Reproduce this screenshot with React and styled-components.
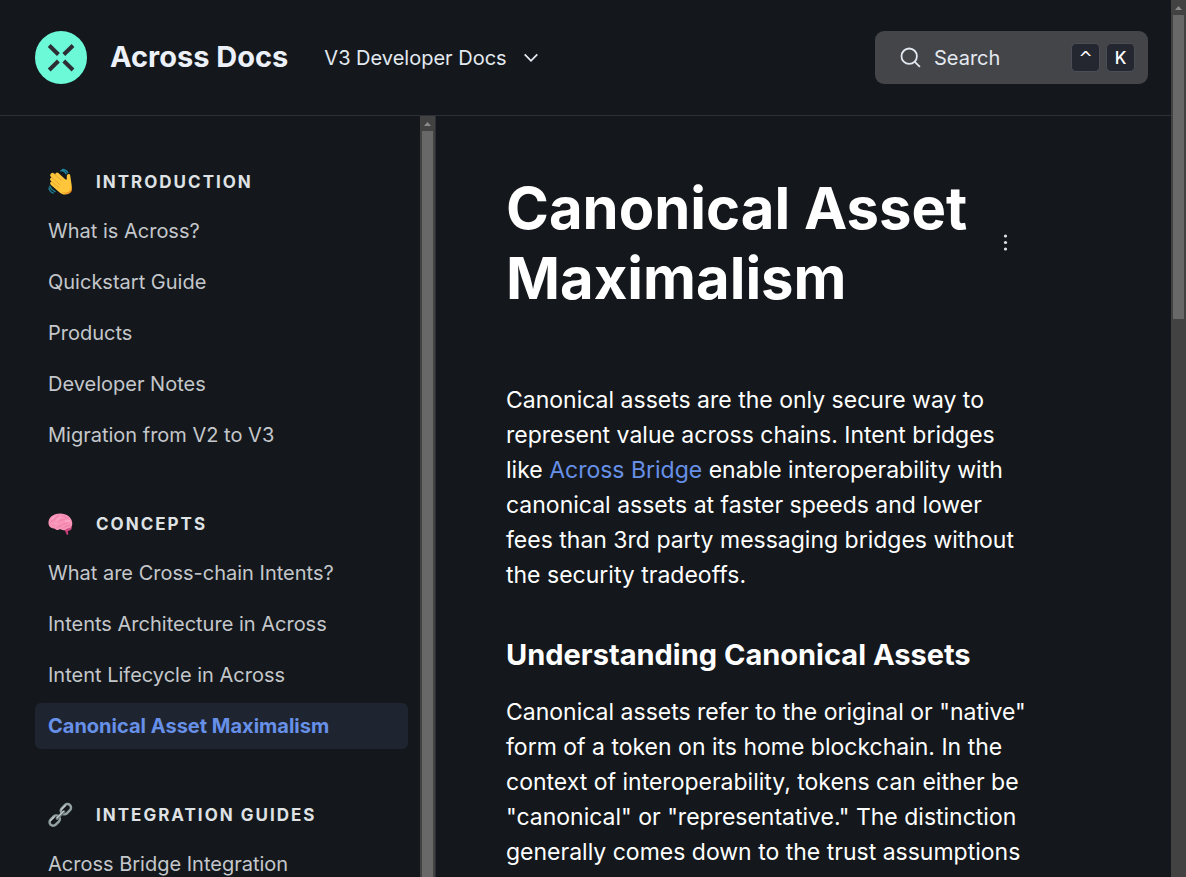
import React from "react";
import styled, { createGlobalStyle } from "styled-components";

const Global = createGlobalStyle`
  *, *::before, *::after { box-sizing: border-box; }
  body {
    margin: 0;
    background: #14181c;
    color: #ffffff;
    font-family: Inter, "Liberation Sans", sans-serif;
  }
  button { font: inherit; color: inherit; border: 0; background: none; padding: 0; cursor: pointer; }
  h1, h2, h3, p, ul { margin: 0; padding: 0; }
  a { text-decoration: none; }
`;

const Window = styled.div`
  display: flex;
  height: 100vh;
  overflow: hidden;
`;

const Page = styled.div`
  flex: 1;
  min-width: 0;
  display: flex;
  flex-direction: column;
`;

const Header = styled.header`
  flex: none;
  display: flex;
  align-items: center;
  height: 116px;
  padding: 0 23px 0 35px;
  border-bottom: 1px solid #2c2f37;
`;

const Brand = styled.a`
  display: flex;
  align-items: center;
  gap: 23px;
  color: #ecf1f9;
  font-size: 29px;
  font-weight: 700;
  line-height: 36px;
  white-space: nowrap;
`;

const BrandName = styled.span`
  padding-bottom: 2px;
`;

const VersionButton = styled.button`
  display: flex;
  align-items: center;
  gap: 16px;
  margin-left: 36px;
  color: #e3e9f1;
  font-size: 20px;
  line-height: 28px;
  white-space: nowrap;
`;

const SearchButton = styled.button`
  display: flex;
  align-items: center;
  width: 273px;
  height: 53px;
  margin-left: auto;
  padding: 0 13px 0 25px;
  border-radius: 9px;
  background: #444548;
  color: #e3e9f1;
  font-size: 20px;
  line-height: 28px;
`;

const SearchLabel = styled.span`
  flex: 1;
  margin-left: 13px;
  text-align: left;
`;

const Key = styled.kbd`
  display: flex;
  align-items: center;
  justify-content: center;
  width: 29px;
  height: 29px;
  margin-left: 6px;
  border: 1px solid #4b4e57;
  border-radius: 5px;
  background: #242730;
  color: #ffffff;
  font-family: ${(p) => (p.$symbol ? '"DejaVu Sans", sans-serif' : "inherit")};
  font-size: 17px;
  font-weight: 500;
`;

const Columns = styled.div`
  flex: 1;
  min-height: 0;
  display: flex;
`;

const Sidebar = styled.aside`
  flex: none;
  display: flex;
  width: 436px;
  border-right: 1px solid #2c2f37;
`;

const Nav = styled.nav`
  flex: 1;
  min-width: 0;
  overflow: hidden;
  padding: 53px 12px 0 35px;
`;

const Section = styled.section`
  margin-bottom: 53px;
`;

const SectionTitle = styled.h3`
  display: flex;
  align-items: center;
  gap: 23px;
  height: 26px;
  margin-bottom: 13px;
  padding-left: 13px;
  color: #dfe2e5;
  font-size: 17px;
  font-weight: 700;
  letter-spacing: 2px;
  text-transform: uppercase;
`;

const Links = styled.ul`
  display: flex;
  flex-direction: column;
  gap: 5px;
  list-style: none;
`;

const NavLink = styled.a`
  display: block;
  height: 46px;
  padding: 0 13px;
  border-radius: 6px;
  background: ${(p) => (p.$active ? "#1f2530" : "transparent")};
  color: ${(p) => (p.$active ? "#6790e8" : "#c4c7cb")};
  font-size: 20px;
  font-weight: ${(p) => (p.$active ? 700 : 400)};
  line-height: 46px;
  white-space: nowrap;
`;

const Content = styled.main`
  flex: 1;
  min-width: 0;
  overflow: hidden;
  padding: 57px 140px 0 70px;
`;

const TitleRow = styled.div`
  display: flex;
  align-items: center;
  justify-content: space-between;
  margin-bottom: 70px;
`;

const Title = styled.h1`
  font-size: 58px;
  font-weight: 700;
  line-height: 70px;
`;

const MenuButton = styled.button`
  display: flex;
  margin-right: 17px;
`;

const Paragraph = styled.p`
  margin-bottom: 44px;
  font-size: 23px;
  line-height: 35px;

  a { color: #6790e8; }
`;

const Subtitle = styled.h2`
  margin-bottom: 22px;
  font-size: 29px;
  font-weight: 700;
  line-height: 36px;
`;

const Track = styled.div`
  flex: none;
  display: flex;
  flex-direction: column;
  align-items: center;
  width: 15px;
  background: #424242;
`;

const Arrow = styled.svg`
  flex: none;
  display: block;
  width: 15px;
  height: 15px;
`;

const Thumb = styled.div`
  width: 11px;
  height: ${(p) => p.$size};
  background: #686868;
`;

function Scrollbar({ size }) {
  return (
    <Track aria-hidden="true">
      <Arrow viewBox="0 0 15 15"><path d="M4 10h7L7.5 6z" fill="#8b8b8b" /></Arrow>
      <Thumb $size={size} />
    </Track>
  );
}

const Logo = () => (
  <svg width="52" height="53" viewBox="0 0 52 53" aria-hidden="true">
    <ellipse cx="26" cy="26.5" rx="26" ry="26.5" fill="#6cf9d8" />
    <path d="M14.2 14.5l9.2 9M38 14.5l-9.2 9M14.200 39l9.200-9M38 39l-9.200-9" stroke="#2d2e33" strokeWidth="4" />
  </svg>
);

const Chevron = () => (
  <svg width="16" height="16" viewBox="0 0 16 16" fill="none" aria-hidden="true">
    <path d="M1.700 4.300L8 10.800l6.300-6.500" stroke="#e3e9f1" strokeWidth="1.800" />
  </svg>
);

const SearchIcon = () => (
  <svg width="21" height="21" viewBox="0 0 21 21" fill="none" stroke="#e3e9f1" strokeWidth="1.800" aria-hidden="true">
    <circle cx="9.200" cy="9.200" r="7.700" />
    <path d="M14.600 14.600l5.300 5.300" />
  </svg>
);

const Wave = () => (
  <svg width="25" height="28" viewBox="0 0 26 28" fill="none" aria-hidden="true">
    <g stroke="#1f8299" strokeWidth="1.4" strokeLinecap="round">
      <path d="M13.3 2.3c2.3-.4 4.4.8 5.6 3.2M15 1c3-.1 4.4 1.1 5.5 3.3M1 20.2c.4 2.6 1.9 4.5 4.500 5.300M1.900 18.300c1 2.800 2.500 4.500 5.500 5.600" />
    </g>
    <path d="M3.3 5.1c1-1 2.1-.6 3 .2l1.3 1c-.3-1.7 1.8-2.9 3.2-1.6l7.1 6.4c1.2 1 1.9.2 1.7-1.4-.3-2.2.1-3.8 1.8-4 1.5-.2 1.7 1.1 1.9 2.9l1.3 8.9c.6 4-.2 6.7-2.8 8.4-3 1.9-6.9 1.5-10-1.2L3.1 17c-1.6-1.5-.6-3.3.8-3.3l-1-1c-1.6-1.6-.3-3.4 1.1-3.1L3.4 9C1.8 7.6 2 6.2 3.3 5.1z" fill="#ffc63c" />
    <path d="M6.200 5.300l8.300 7.600M4 9.500l8.400 7.400M3.900 13.700l7.300 6.200" stroke="#e5a02a" strokeWidth=".8" strokeLinecap="round" />
    <path d="M24.600 17.500c.2 6.300-4.800 9.500-10.600 6.700 3.500 2.800 7.400 2.700 9.800.5 1.400-1.400 1.500-4.300.8-7.200z" fill="#e68e22" />
  </svg>
);

const Brain = () => (
  <svg width="25" height="26" viewBox="0 0 26 26" fill="none" aria-hidden="true">
    <path d="M17 18.500l2.200 5.200c.8 1 2 .6 1.800-.6l-.4-4.500z" fill="#c53b77" />
    <path d="M17 15.500c4-.8 8.300-.5 7.800 1.600-.5 2.700-4.200 4-8 2.400z" fill="#cb4b82" />
    <path d="M.5 12.500C.1 6.700 5.200 2.200 12.500 2.200c7 0 12.200 4.100 12.700 9.500.3 3.600-1 5.400-3.800 5.600-2 .1-3 1.800-4.700 2.100-1.700.3-2.600-1-4-1-1.400 0-2 1-3.500.8-1.200-.2-1.500-1.400-3.200-1.500C2.800 17.500.8 15.500.5 12.500z" fill="#f994b8" />
    <path d="M3 11c1-2.500 3-1 4-3.200S10 5.500 11 4M5 15c.2-2.500 3-1 4.500-3.200M9 17c1.500-2.800 4.500-.5 6-3.500 1-1.700 4 .3 5.500-2M12 10c2-3 4 .2 6-2.500M15 4c1 2 4 1 6 3.500M16 17c1-2 4-1.500 7-3" stroke="#e370a0" strokeWidth=".7" strokeLinecap="round" />
    <path d="M4 8c1-1.500 2-1.300 3-2.700M9 9c1-1.500 2.500-1 4-3M18 10c1.500-.5 2.500.5 4.500-.5M6 13.500c1-1 2-.8 3-1" stroke="#ffc1d9" strokeWidth=".8" strokeLinecap="round" />
  </svg>
);

const Chain = () => (
  <svg width="25" height="26" viewBox="0 0 26 26" fill="none" aria-hidden="true">
    <g stroke="#93a1a3" strokeWidth="2.600">
      <rect x="-6" y="-3.700" width="12" height="7.400" rx="3.700" transform="translate(18.600 7) rotate(-45)" />
      <rect x="-6" y="-3.700" width="12" height="7.400" rx="3.700" transform="translate(7 18.800) rotate(-45)" />
    </g>
    <path d="M9.500 16.500l7-7" stroke="#657175" strokeWidth="3.200" strokeLinecap="round" />
    <path d="M9.300 16.100l6.700-6.800M14.200 7.200L18 3.400M2.700 18.800l3.700-3.700" stroke="#cbd2d3" strokeWidth="1.200" strokeLinecap="round" />
  </svg>
);

const Dots = () => (
  <svg width="16" height="18" viewBox="0 0 16 18" fill="#dfe2e5" aria-hidden="true">
    <circle cx="7.500" cy="2" r="1.600" />
    <circle cx="7.500" cy="8.500" r="1.600" />
    <circle cx="7.500" cy="15" r="1.600" />
  </svg>
);

const sections = [
  {
    title: "Introduction",
    Icon: Wave,
    links: ["What is Across?", "Quickstart Guide", "Products", "Developer Notes", "Migration from V2 to V3"],
  },
  {
    title: "Concepts",
    Icon: Brain,
    links: ["What are Cross-chain Intents?", "Intents Architecture in Across", "Intent Lifecycle in Across", "Canonical Asset Maximalism"],
  },
  { title: "Integration Guides", Icon: Chain, links: ["Across Bridge Integration"] },
];

const current = "Canonical Asset Maximalism";

export default function App() {
  return (
    <Window>
      <Global />
      <Page>
        <Header>
          <Brand href="#"><Logo /><BrandName>Across Docs</BrandName></Brand>
          <VersionButton type="button">V3 Developer Docs<Chevron /></VersionButton>
          <SearchButton type="button">
            <SearchIcon />
            <SearchLabel>Search</SearchLabel>
            <Key $symbol>^</Key>
            <Key>K</Key>
          </SearchButton>
        </Header>
        <Columns>
          <Sidebar>
            <Nav aria-label="Documentation">
              {sections.map(({ title, Icon, links }) => (
                <Section key={title}>
                  <SectionTitle><Icon />{title}</SectionTitle>
                  <Links>
                    {links.map((link) => (
                      <li key={link}>
                        <NavLink href="#" $active={link === current} aria-current={link === current ? "page" : undefined}>
                          {link}
                        </NavLink>
                      </li>
                    ))}
                  </Links>
                </Section>
              ))}
            </Nav>
            <Scrollbar size="100%" />
          </Sidebar>
          <Content>
            <TitleRow>
              <Title>Canonical Asset Maximalism</Title>
              <MenuButton type="button" aria-label="Page actions"><Dots /></MenuButton>
            </TitleRow>
            <Paragraph>
              Canonical assets are the only secure way to represent value across chains. Intent bridges
              like <a href="#">Across Bridge</a> enable interoperability with canonical assets at faster
              speeds and lower fees than 3rd party messaging bridges without the security tradeoffs.
            </Paragraph>
            <Subtitle>Understanding Canonical Assets</Subtitle>
            <Paragraph>
              Canonical assets refer to the original or "native" form of a token on its home blockchain.
              In the context of interoperability, tokens can either be "canonical" or "representative."
              The distinction generally comes down to the trust assumptions
            </Paragraph>
          </Content>
        </Columns>
      </Page>
      <Scrollbar size="304px" />
    </Window>
  );
}
